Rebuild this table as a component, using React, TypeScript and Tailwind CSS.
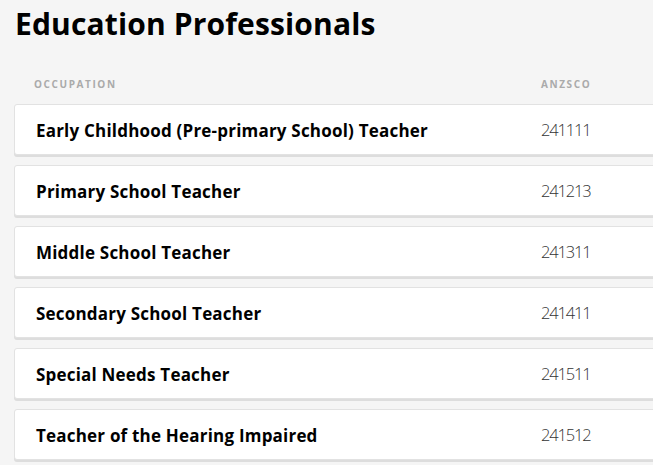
import React from 'react';

const occupations = [
  { name: 'Early Childhood (Pre-primary School) Teacher', code: '241111' },
  { name: 'Primary School Teacher', code: '241213' },
  { name: 'Middle School Teacher', code: '241311' },
  { name: 'Secondary School Teacher', code: '241411' },
  { name: 'Special Needs Teacher', code: '241511' },
  { name: 'Teacher of the Hearing Impaired', code: '241512' },
];

export default function App() {
  return (
    <div
      className="min-h-screen w-full overflow-hidden bg-[#f5f5f5] pl-[14px]"
      style={{ fontFamily: '"Open Sans", "Noto Sans", sans-serif' }}
    >
      <h1 className="pt-[4px] pl-[1px] text-[30px] font-bold leading-[40px] tracking-[0.005em] text-black">
        Education Professionals
      </h1>

      {/* Column headers */}
      <div className="mt-[33px] flex text-[10px] font-bold uppercase tracking-[0.16em] text-[#aaaaaa]">
        <span className="w-[527px] pl-[20px]">Occupation</span>
        <span>ANZSCO</span>
      </div>

      {/* Rows */}
      <div className="mt-[12px] -mr-6 flex flex-col gap-[10px]">
        {occupations.map((o) => (
          <div
            key={o.code}
            className="flex h-[51px] items-center rounded-[3px] border border-[#e2e2e2] bg-white pt-[2px] shadow-[0_2px_0_#dddddd]"
          >
            <span className="w-[526px] pl-[21px] text-[17px] font-bold tracking-[0.012em] text-black">{o.name}</span>
            <span className="text-[16.5px] font-light tracking-[-0.07em] text-[#333333]">{o.code}</span>
          </div>
        ))}
      </div>
    </div>
  );
}
